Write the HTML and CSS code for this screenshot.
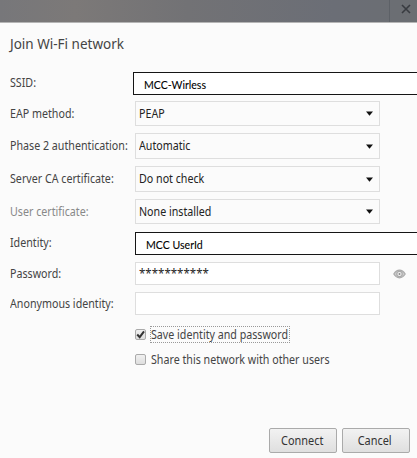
FILE: index.html
```html
<!DOCTYPE html>
<html lang="en">
<head>
<meta charset="utf-8">
<title>Join Wi-Fi network</title>
<link rel="stylesheet" href="styles.css">
</head>
<body>
<header class="titlebar">
  <div class="close"><svg width="10" height="10" viewBox="0 0 10 10"><path d="M1 1l8 8M9 1L1 9" stroke="#383b40" stroke-width="1.6"/></svg></div>
</header>
<main class="dialog">
  <h1>Join Wi-Fi network</h1>
  <div class="form">
    <div class="row ssid"><label>SSID:</label><div class="marked"><span>MCC-Wirless</span></div></div>
    <div class="row"><label>EAP method:</label><div class="select"><span>PEAP</span><svg class="arrow" width="7" height="5" viewBox="0 0 7 5"><path d="M0 .5h7L3.5 4.8z"/></svg></div></div>
    <div class="row tall"><label>Phase 2 authentication:</label><div class="select"><span>Automatic</span><svg class="arrow" width="7" height="5" viewBox="0 0 7 5"><path d="M0 .5h7L3.5 4.8z"/></svg></div></div>
    <div class="row tall"><label>Server CA certificate:</label><div class="select"><span>Do not check</span><svg class="arrow" width="7" height="5" viewBox="0 0 7 5"><path d="M0 .5h7L3.5 4.8z"/></svg></div></div>
    <div class="row"><label class="muted">User certificate:</label><div class="select"><span>None installed</span><svg class="arrow" width="7" height="5" viewBox="0 0 7 5"><path d="M0 .5h7L3.5 4.8z"/></svg></div></div>
    <div class="row identity"><label>Identity:</label><div class="marked"><span>MCC UserId</span></div></div>
    <div class="row text"><label>Password:</label><div class="input"><span class="stars">***********</span></div>
      <svg class="eye" width="13" height="10" viewBox="0 0 13 10"><path d="M.8 5Q3.2 1.2 6.5 1.2T12.2 5Q9.8 8.8 6.5 8.8T.8 5z" fill="#ccc" stroke="#aaa" stroke-width="1.2"/><circle cx="6.5" cy="5" r="2.7" fill="#f4f4f4" stroke="#aaa" stroke-width="1.2"/><circle cx="6.5" cy="5" r="1" fill="#888"/></svg></div>
    <div class="row text"><label>Anonymous identity:</label><div class="input"></div></div>
  </div>
  <div class="checks">
    <div class="check"><span class="box"><svg width="9" height="9" viewBox="0 0 9 9"><path d="M1.2 4.5l2.5 2.7L8 1.3" fill="none" stroke="#333" stroke-width="2"/></svg></span><span class="focus"><span>Save identity and password</span></span></div>
    <div class="check"><span class="box"></span><span class="plain">Share this network with other users</span></div>
  </div>
  <footer><button><span>Connect</span></button><button><span>Cancel</span></button></footer>
</main>
</body>
</html>
```
FILE: styles.css
```css
* { box-sizing: border-box; }
body {
  margin: 0;
  width: 417px;
  height: 458px;
  overflow: hidden;
  background: #fbfbfb;
  color: #444;
  font: 12px/16px "Noto Sans", sans-serif;
  white-space: nowrap;
}
svg { display: block; }
.titlebar {
  height: 23px;
  display: flex;
  justify-content: flex-end;
  background: linear-gradient(90deg, #77777a, #7c7978 18%, #727275 45%, #6b6e76 80%, #6b6e72);
  border-bottom: 1px solid #b5b5b5;
}
.close {
  width: 28px;
  padding: 4px 0 0 11px;
  border-left: 1px solid #5d6167;
}
.dialog {
  height: 435px;
  display: flex;
  flex-direction: column;
}
h1 {
  margin: 11px 0 0 10px;
  height: 20px;
  font-size: 14px;
  line-height: 20px;
  font-weight: 400;
  transform: scaleX(.965);
  transform-origin: left;
}
.form { margin-top: 18px; }
.row {
  display: flex;
  align-items: center;
  height: 25px;
  margin-top: 7px;
  padding-left: 10px;
}
.row label { width: 125px; flex: none; }
label, .select span, .focus span, .plain {
  transform: scaleX(.89);
  transform-origin: left;
}
.row.tall { height: 26px; }
.row.ssid { height: 24px; margin: 0 0 -2px; align-items: flex-start; }
.row.ssid label { width: 123px; line-height: 21px; }
.row.identity { height: 24px; margin-top: 8px; align-items: flex-start; }
.identity label { margin-top: 3px; }
.row.text { height: 23px; margin-top: 7px; }
.row.identity + .row { margin-top: 6px; }
.muted { color: #888; }
.marked {
  flex: 1;
  height: 23px;
  padding: 2px 0 0 10px;
  border: 1px solid #151515;
  border-right: 0;
  background: #fff;
  color: #000;
  font: 12px/20px Lato, sans-serif;
}
.marked span {
  display: inline-block;
  transform: scaleX(.88);
  transform-origin: left;
  -webkit-text-stroke: .1px #000;
}
.select, .input {
  width: 245px;
  height: 100%;
  display: flex;
  align-items: center;
  border: 1px solid #dedede;
  padding: 0 6px 0 3px;
  color: #222;
}
.select { justify-content: space-between; }
.input { background: #fff; }
.arrow { fill: #111; }
.stars { transform: scaleX(.96); transform-origin: left; }
.eye { margin-left: 13px; }
.checks { margin: 11px 0 0 135px; }
.check {
  display: flex;
  align-items: center;
  height: 17px;
  margin-bottom: 8px;
}
.box {
  width: 11px;
  height: 11px;
  display: flex;
  align-items: center;
  justify-content: center;
  border: 1px solid #aaa;
  border-radius: 2px;
  background: linear-gradient(#f0f0f0, #dedede);
}
.focus {
  width: 140px;
  margin-left: 4px;
  border: 1px dotted #999;
  line-height: 15px;
}
.focus span { display: block; }
.plain { margin-left: 5px; }
footer {
  margin: auto 7px 5px auto;
  display: flex;
  gap: 5px;
}
button {
  width: 68px;
  height: 25px;
  padding: 0 2px 0 0;
  border: 1px solid #aaa;
  border-radius: 2px;
  background: linear-gradient(#f2f2f2, #dfdfdf);
  color: #333;
  font: 12px/16px "Noto Sans", sans-serif;
}
button span { display: inline-block; transform: scaleX(.91); }
```
